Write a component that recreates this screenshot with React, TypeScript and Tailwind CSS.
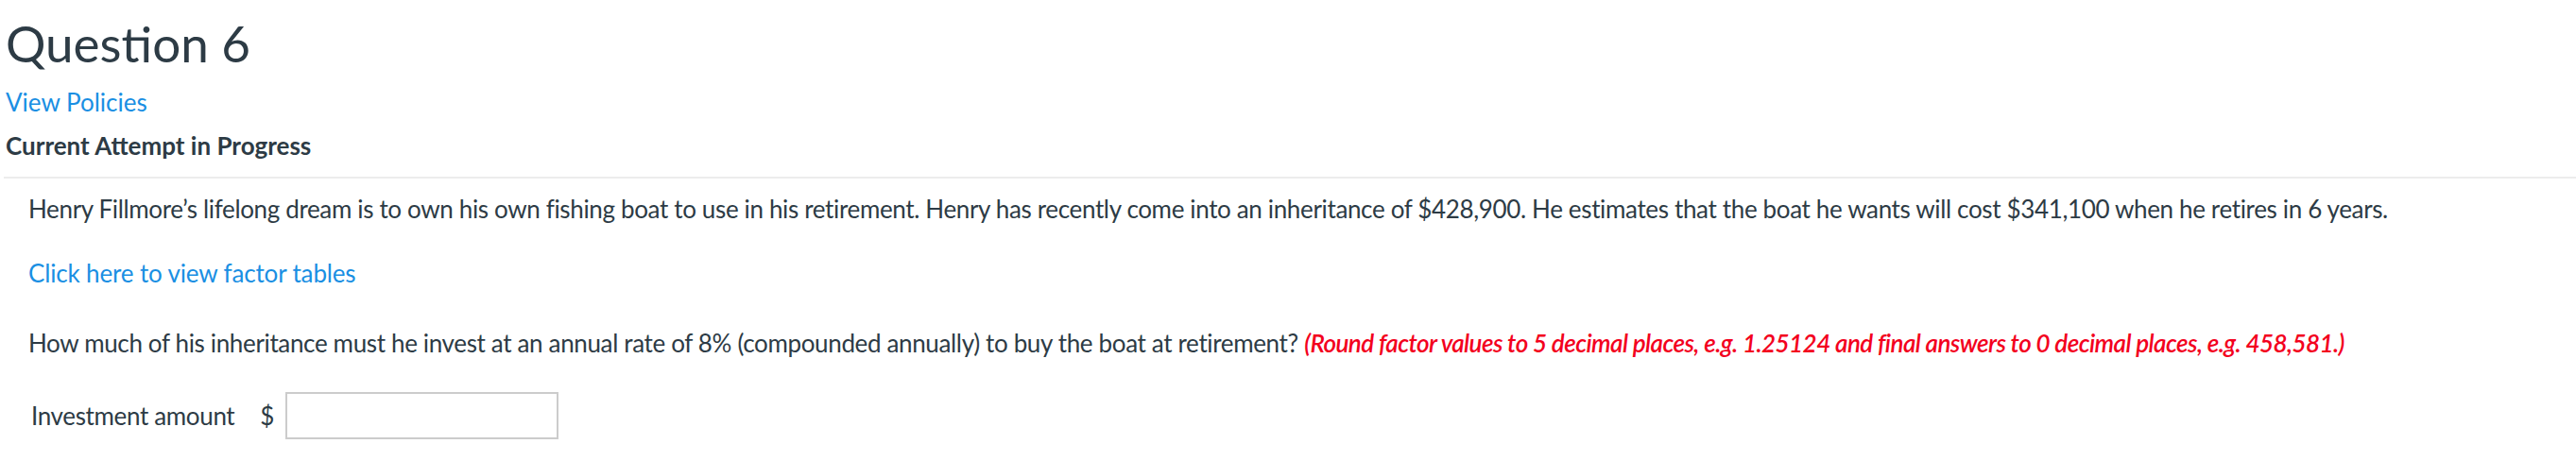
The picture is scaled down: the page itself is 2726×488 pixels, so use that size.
export default function App() {
  return (
    <div className="w-[2726px] h-[488px] bg-white text-[#2d3b45] font-['Lato','Liberation_Sans',sans-serif] pl-[6px] overflow-hidden">
      <h1 className="pt-[19px] text-[53px] leading-[53px] font-normal">Question 6</h1>
      <a href="#" className="block mt-[23px] text-[26px] leading-[26px] text-[#1a8fe3]">View Policies</a>
      <h3 className="mt-[20px] text-[26px] leading-[26px] font-bold">Current Attempt in Progress</h3>

      <div className="mt-[20px] border-t-2 border-[#ececec] pl-[26px] -ml-[2px] tracking-[-0.35px]">
        <p className="mt-[19px] text-[26px] leading-[26px]">
          Henry Fillmore’s lifelong dream is to own his own fishing boat to use in his retirement. Henry has recently come into an inheritance of $428,900. He estimates that the boat he wants will cost $341,100 when he retires in 6 years.
        </p>
        <p className="mt-[42px] text-[26px] leading-[26px] tracking-[-0.15px]">
          <a href="#" className="text-[#1a8fe3]">Click here to view factor tables</a>
        </p>
        <p className="mt-[48px] text-[26px] leading-[26px]">
          How much of his inheritance must he invest at an annual rate of 8% (compounded annually) to buy the boat at retirement?{' '}
          <span className="italic font-semibold tracking-[-0.55px] text-[#f3001d]">
            (Round factor values to 5 decimal places, e.g. 1.25124 and final answers to 0 decimal places, e.g. 458,581.)
          </span>
        </p>
        <div className="mt-[39px] flex items-center text-[26px] leading-[26px]">
          <span className="ml-[3px]">Investment amount</span>
          <span className="ml-[27px]">$</span>
          <input type="text" className="ml-[12px] w-[289px] h-[50px] border-2 border-[#cccccc] bg-white outline-none" />
        </div>
      </div>
    </div>
  );
}
